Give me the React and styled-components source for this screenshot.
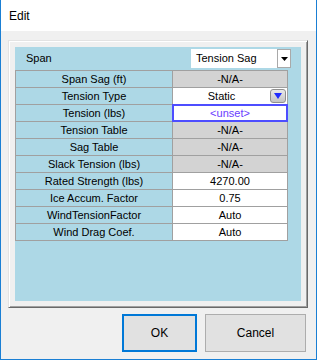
import React from "react";
import styled, { createGlobalStyle } from "styled-components";

const GlobalStyle = createGlobalStyle`
  html, body {
    margin: 0;
    padding: 0;
    background: #ffffff;
  }
  * {
    box-sizing: border-box;
  }
`;

//the window itself, blue edge like win10
const Window = styled.div`
  width: 317px;
  height: 360px;
  display: flex;
  flex-direction: column;
  border: 1px solid #1a7fd4;
  border-top: none;
  font-family: "Liberation Sans", Arial, sans-serif;
  color: #000;
`;
const TitleBar = styled.div`
  height: 31px;
  flex: none;
  display: flex;
  align-items: center;
  padding-left: 8px;
  background: #ffffff;
  font-size: 12px;
`;
const Body = styled.div`
  flex: 1;
  display: flex;
  flex-direction: column;
  background: #f0f0f0;
  padding: 9px 8px 7px 7px;
`;
//raised 3d panel round the grid
const Frame = styled.div`
  height: 268px;
  flex: none;
  padding: 6px;
  border: 1px solid;
  border-color: #e3e3e3 #696969 #696969 #e3e3e3;
  box-shadow: inset 1px 1px #ffffff, inset -1px -1px #a0a0a0;
  display: flex;
`;
const Panel = styled.div`
  flex: 1;
  background: #add8e6;
  display: flex;
  flex-direction: column;
  font-size: 11px;
`;
const HeaderRow = styled.div`
  height: 23px;
  display: flex;
  padding-top: 2px;
`;
const HeaderLabel = styled.div`
  width: 176px;
  padding-left: 11px;
  line-height: 19px;
`;
const Combo = styled.div`
  display: flex;
  height: 19px;
`;
const ComboText = styled.div`
  width: 86px;
  background: #ffffff;
  padding-left: 5px;
  line-height: 19px;
`;
const ComboButton = styled.div`
  width: 14px;
  background: #ffffff;
  border: 1px solid #a9a9a9;
  display: flex;
  align-items: center;
  justify-content: center;
`;
const Grid = styled.div`
  width: 273px;
  display: grid;
  grid-template-columns: 156px 114px;
  grid-auto-rows: 16px;
  gap: 1px;
  padding: 1px;
  background: #a0a0a0;
`;
const Label = styled.div`
  background: #add8e6;
  text-align: center;
  line-height: 16px;
  white-space: nowrap;
`;
const Value = styled.div`
  background: ${(p) => (p.$na ? "#d3d3d3" : "#ffffff")};
  color: ${(p) => (p.$unset ? "#6a3cff" : "#000")};
  outline: ${(p) => (p.$focus ? "2px solid #4d4dff" : "none")};
  outline-offset: -1px;
  display: flex;
  align-items: center;
  line-height: 16px;
  white-space: nowrap;
`;
const ValueText = styled.div`
  flex: 1;
  text-align: center;
`;
const DropBtn = styled.div`
  width: 16px;
  height: 14px;
  margin-right: 1px;
  border-radius: 3px;
  border: 1px solid #8f8f8f;
  background: linear-gradient(#e9e9e9, #c4c4c4);
  display: flex;
  align-items: center;
  justify-content: center;
`;
const Buttons = styled.div`
  display: flex;
  justify-content: flex-end;
  gap: 8px;
  margin-top: 6px;
  padding-right: 2px;
`;
const Button = styled.div`
  width: ${(p) => (p.$wide ? "101px" : "75px")};
  height: 38px;
  background: #e1e1e1;
  border: ${(p) => (p.$primary ? "2px solid #0078d7" : "1px solid #adadad")};
  display: flex;
  align-items: center;
  justify-content: center;
  font-size: 12px;
`;

const rows = [
  { label: "Span Sag (ft)", value: "-N/A-", na: true },
  { label: "Tension Type", value: "Static", drop: true },
  { label: "Tension (lbs)", value: "<unset>", unset: true, focus: true },
  { label: "Tension Table", value: "-N/A-", na: true },
  { label: "Sag Table", value: "-N/A-", na: true },
  { label: "Slack Tension (lbs)", value: "-N/A-", na: true },
  { label: "Rated Strength (lbs)", value: "4270.00" },
  { label: "Ice Accum. Factor", value: "0.75" },
  { label: "WindTensionFactor", value: "Auto" },
  { label: "Wind Drag Coef.", value: "Auto" },
];

const App = () => {
  return (
    <>
      <GlobalStyle />
      <Window>
        <TitleBar>Edit</TitleBar>
        <Body>
          <Frame>
            <Panel>
              <HeaderRow>
                <HeaderLabel>Span</HeaderLabel>
                <Combo>
                  <ComboText>Tension Sag</ComboText>
                  <ComboButton>
                    <svg width="7" height="4" viewBox="0 0 7 4">
                      <path d="M0 0h7L3.5 4z" fill="#000" />
                    </svg>
                  </ComboButton>
                </Combo>
              </HeaderRow>
              <Grid>
                {rows.map((r) => (
                  <React.Fragment key={r.label}>
                    <Label>{r.label}</Label>
                    <Value $na={r.na} $unset={r.unset} $focus={r.focus}>
                      <ValueText>{r.value}</ValueText>
                      {r.drop && (
                        <DropBtn>
                          <svg width="8" height="6" viewBox="0 0 8 6">
                            <path d="M0 0h8L4 6z" fill="#1f2bff" />
                          </svg>
                        </DropBtn>
                      )}
                    </Value>
                  </React.Fragment>
                ))}
              </Grid>
            </Panel>
          </Frame>
          <Buttons>
            <Button $primary>OK</Button>
            <Button $wide>Cancel</Button>
          </Buttons>
        </Body>
      </Window>
    </>
  );
};

export default App;
